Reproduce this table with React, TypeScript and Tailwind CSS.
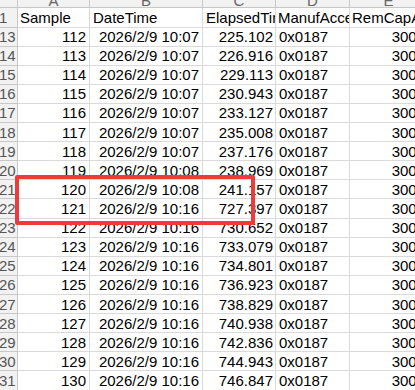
const ROWS: [number, number, string, string][] = [
  [13, 112, '10:07', '225.102'],
  [14, 113, '10:07', '226.916'],
  [15, 114, '10:07', '229.113'],
  [16, 115, '10:07', '230.943'],
  [17, 116, '10:07', '233.127'],
  [18, 117, '10:07', '235.008'],
  [19, 118, '10:07', '237.176'],
  [20, 119, '10:08', '238.969'],
  [21, 120, '10:08', '241.157'],
  [22, 121, '10:16', '727.397'],
  [23, 122, '10:16', '730.652'],
  [24, 123, '10:16', '733.079'],
  [25, 124, '10:16', '734.801'],
  [26, 125, '10:16', '736.923'],
  [27, 126, '10:16', '738.829'],
  [28, 127, '10:16', '740.938'],
  [29, 128, '10:16', '742.836'],
  [30, 129, '10:16', '744.943'],
  [31, 130, '10:16', '746.847'],
  [32, 131, '10:16', '748.951'],
]

const cell = 'shrink-0 h-full flex items-center overflow-hidden whitespace-nowrap border-r border-b border-[#dadada]'

function RowHead({ n }: { n: number }) {
  return (
    <div className="shrink-0 w-[18px] h-full flex items-center overflow-hidden whitespace-nowrap bg-[#f2f2f2] border-r border-b border-[#c8c8c8] text-[#555555]">
      <span className="-ml-[1px]">{n}</span>
    </div>
  )
}

export default function App() {
  return (
    <div className="relative w-[415px] h-[390px] overflow-hidden bg-white text-[15px] leading-none text-black font-['Liberation_Sans',Arial,sans-serif]">
      {/* column letters */}
      <div className="flex h-[8px] text-[#666666]">
        {[
          ['', 'w-[18px]'],
          ['A', 'w-[72px]'],
          ['B', 'w-[113px]'],
          ['C', 'w-[73px]'],
          ['D', 'w-[74px]'],
          ['E', 'w-[78px]'],
        ].map(([l, w], i) => (
          <div
            key={i}
            className={`${w} shrink-0 h-full overflow-hidden flex justify-center items-end bg-[#f2f2f2] border-r border-b border-[#c8c8c8]`}
          >
            <span className="text-[15px] leading-none -mb-[1px]">{l}</span>
          </div>
        ))}
      </div>

      {/* header row */}
      <div className="flex h-[19.5px]">
        <RowHead n={1} />
        <div className={`${cell} w-[72px] pl-[2px]`}>Sample</div>
        <div className={`${cell} w-[113px] pl-[3px]`}>DateTime</div>
        <div className={`${cell} w-[73px] pl-[3px]`}>ElapsedTime</div>
        <div className={`${cell} w-[74px] pl-[2px]`}>ManufAccess</div>
        <div className={`${cell} w-[78px] pl-[2px]`}>RemCapAlarm</div>
      </div>

      {ROWS.map(([n, s, t, e]) => (
        <div key={n} className="flex h-[19.11px]">
          <RowHead n={n} />
          <div className={`${cell} w-[72px] justify-end pr-[3px]`}>{s}</div>
          <div className={`${cell} w-[113px] justify-end pr-[3px]`}>2026/2/9 {t}</div>
          <div className={`${cell} w-[73px] justify-end pr-[2px]`}>{e}</div>
          <div className={`${cell} w-[74px] pl-[3px]`}>0x0187</div>
          <div className={`${cell} w-[78px] justify-end pr-[2px]`}>3000</div>
        </div>
      ))}

      {/* highlight */}
      <div className="absolute left-[15px] top-[175px] w-[240px] h-[50px] border-4 border-[#ee3a3a] rounded-[2px] pointer-events-none" />
    </div>
  )
}
